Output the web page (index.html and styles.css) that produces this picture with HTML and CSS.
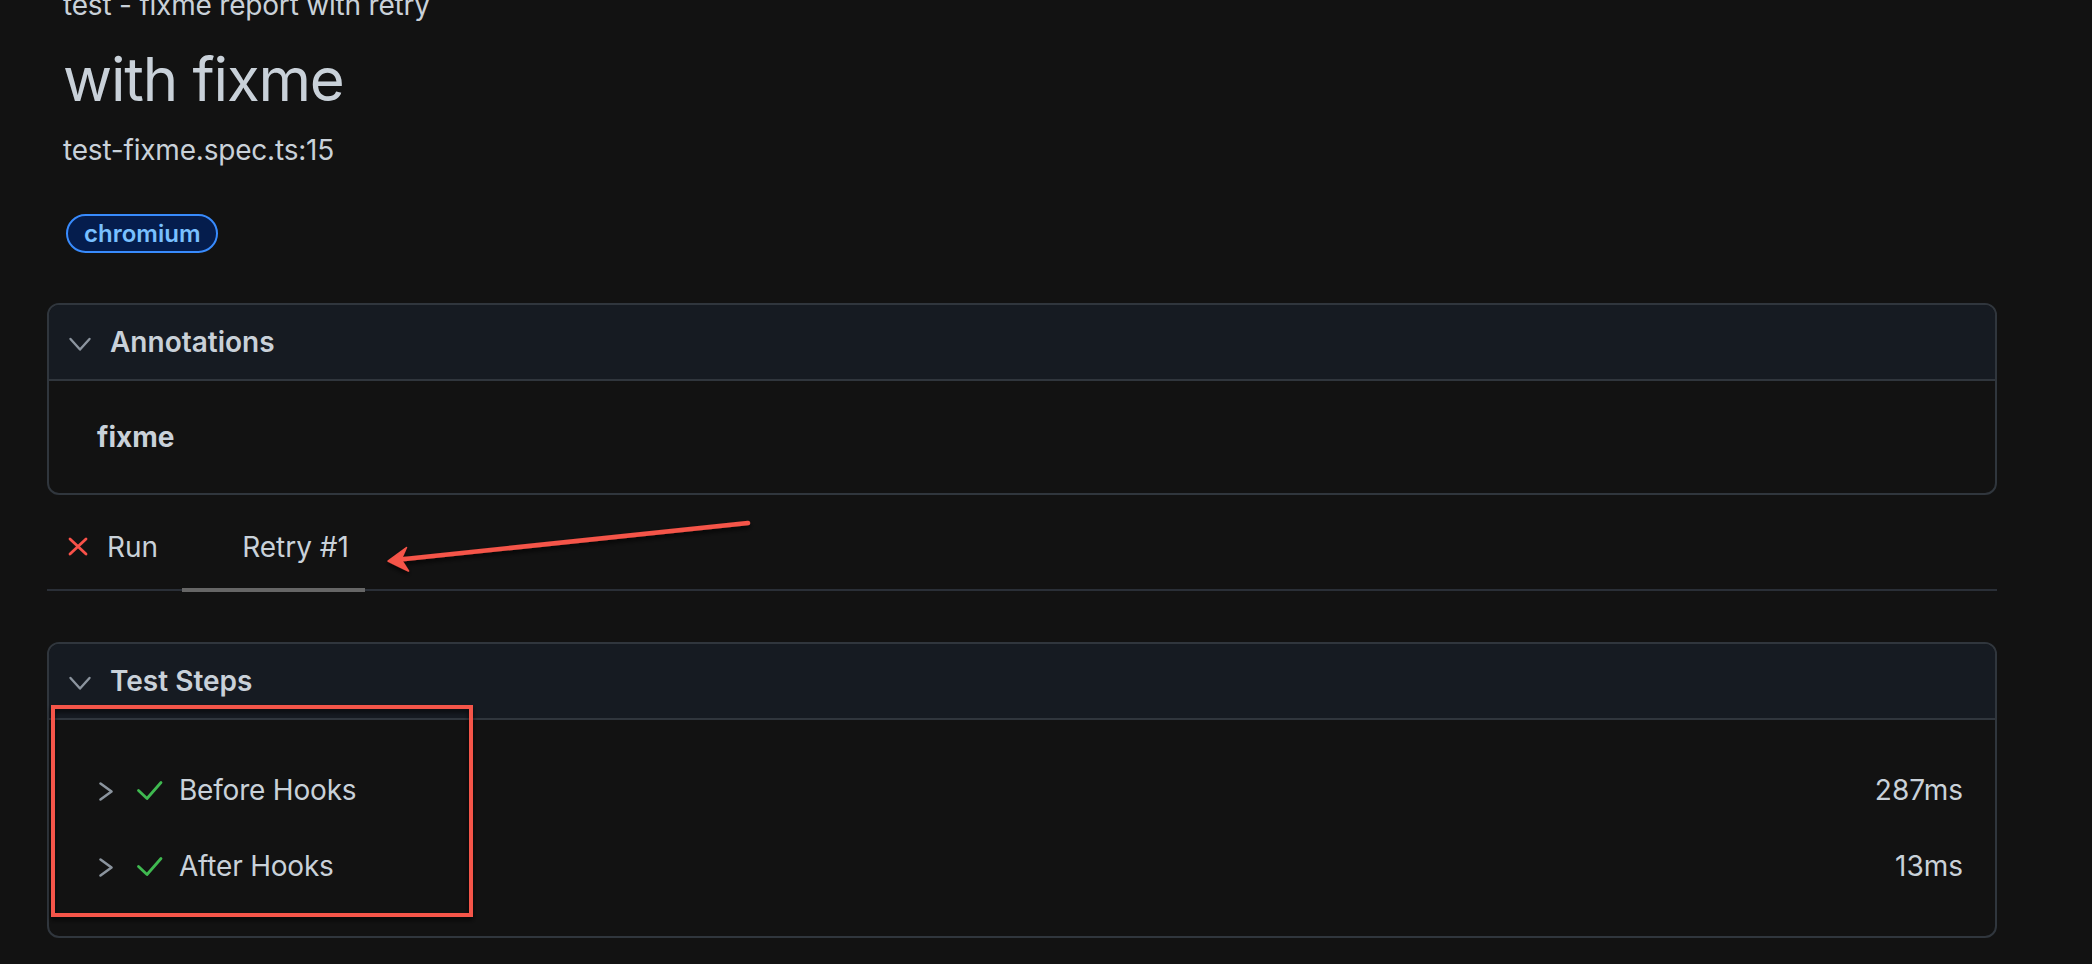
FILE: index.html
```html
<!DOCTYPE html>
<html>
<head>
<meta charset="utf-8">
<title>with fixme</title>
<link rel="stylesheet" href="styles.css">
</head>
<body>
<div class="page">
  <div class="test-path">test - fixme report with retry</div>
  <h1 class="test-title">with fixme</h1>
  <div class="test-location">test-fixme.spec.ts:15</div>
  <div class="labels"><span class="label">chromium</span></div>

  <section class="chip annotations">
    <div class="chip-header">
      <svg class="chev-down" viewBox="0 0 32 32"><path d="M6.5 13 L16 23.5 L25.5 13"/></svg>
      <span>Annotations</span>
    </div>
    <div class="chip-body">
      <div class="annotation">fixme</div>
    </div>
  </section>

  <div class="tabs">
    <div class="tab">
      <svg class="tab-icon x-icon" viewBox="0 0 32 32"><path d="M8 8 L24 23 M24 8 L8 23"/></svg>
      <span>Run</span>
    </div>
    <div class="tab selected">
      <span class="tab-icon"></span>
      <span>Retry #1</span>
    </div>
  </div>

  <section class="chip steps">
    <div class="chip-header">
      <svg class="chev-down" viewBox="0 0 32 32"><path d="M6.5 13 L16 23.5 L25.5 13"/></svg>
      <span>Test Steps</span>
    </div>
    <div class="chip-body steps-body">
      <div class="step">
        <svg class="chev-right" viewBox="0 0 32 32"><path d="M7.5 9.5 L18.5 17.5 L7.5 25.5"/></svg>
        <svg class="check" viewBox="0 0 32 32"><path d="M4.5 16.5 L13 24.5 L27 8.5"/></svg>
        <span class="step-title">Before Hooks</span>
        <span class="step-duration">287ms</span>
      </div>
      <div class="step">
        <svg class="chev-right" viewBox="0 0 32 32"><path d="M7.5 9.5 L18.5 17.5 L7.5 25.5"/></svg>
        <svg class="check" viewBox="0 0 32 32"><path d="M4.5 16.5 L13 24.5 L27 8.5"/></svg>
        <span class="step-title">After Hooks</span>
        <span class="step-duration">13ms</span>
      </div>
    </div>
  </section>
</div>

<svg class="markup" width="2092" height="964" viewBox="0 0 2092 964">
  <defs>
    <filter id="shadow" x="-10%" y="-10%" width="120%" height="130%">
      <feDropShadow dx="0" dy="3" stdDeviation="2.5" flood-color="#000" flood-opacity="0.75"/>
    </filter>
  </defs>
  <g filter="url(#shadow)">
    <line x1="748" y1="523" x2="400" y2="559.5" stroke="#f55448" stroke-width="4.5" stroke-linecap="round"/>
    <polygon points="388,561 406.5,547.5 401,559.5 408.5,571" fill="#f55448" stroke="#f55448" stroke-width="1.5" stroke-linejoin="round"/>
    <rect x="53" y="707" width="418" height="208" fill="none" stroke="#f55448" stroke-width="4"/>
  </g>
</svg>
</body>
</html>
```

FILE: styles.css
```css
* {
  box-sizing: border-box;
}

html,
body {
  margin: 0;
  padding: 0;
  background: #121212;
}

body {
  position: relative;
  height: 964px;
  overflow: hidden;
  font-family: Inter, "Noto Sans", "Liberation Sans", sans-serif;
  font-size: 28px;
  color: #c9d1d9;
}

.page {
  width: 1950px;
  margin-left: 47px;
  margin-top: -15px;
}

.test-path {
  padding: 0 16px;
  line-height: 40px;
  letter-spacing: -0.2px;
}

.test-title {
  margin: 14px 0 0;
  padding: 0 16px;
  font-size: 60px;
  font-weight: 400;
  line-height: 80px;
  letter-spacing: -1.2px;
}

.test-location {
  margin-top: 11px;
  padding: 0 16px;
  line-height: 40px;
  letter-spacing: -0.2px;
}

.labels {
  display: flex;
  margin-top: 44px;
  padding-left: 19px;
}

.label {
  display: inline-block;
  padding: 0 16px;
  font-size: 24px;
  font-weight: 600;
  line-height: 35px;
  border: 2px solid #388bfd;
  border-radius: 40px;
  background: #051d4d;
  color: #79c0ff;
}

.chip {
  border: 2px solid #30363d;
  border-radius: 12px;
  overflow: hidden;
}

.annotations {
  margin-top: 50px;
}

.chip-header {
  display: flex;
  align-items: center;
  padding: 17px 15px;
  line-height: 40px;
  font-weight: 600;
  background: #161b22;
  border-bottom: 2px solid #30363d;
}

.chev-down {
  flex: none;
  width: 32px;
  height: 32px;
  margin-right: 14px;
  fill: none;
  stroke: #8b949e;
  stroke-width: 2.4;
  stroke-linecap: round;
  stroke-linejoin: round;
}

.chip-body {
  padding: 32px 48px;
}

.annotation {
  line-height: 48px;
  font-weight: 700;
}

.tabs {
  display: flex;
  gap: 8px;
  border-bottom: 2px solid #2a2f37;
}

.tab {
  display: flex;
  align-items: center;
  padding: 32px 16px 21px 15px;
  line-height: 40px;
  border-bottom: 4px solid transparent;
  margin-bottom: -3px;
}

.tab.selected {
  border-bottom-color: #666666;
}

.tab-icon {
  flex: none;
  width: 32px;
  height: 32px;
  margin-right: 13px;
}

.x-icon {
  fill: none;
  stroke: #f85149;
  stroke-width: 2.8;
  stroke-linecap: round;
}

.steps {
  margin-top: 51px;
}

.steps-body {
  padding: 32px 32px 32px 44px;
}

.step {
  display: flex;
  align-items: center;
  height: 76px;
}

.step-title {
  letter-spacing: -0.2px;
}

.chev-right {
  flex: none;
  width: 32px;
  height: 32px;
  margin-right: 9px;
  fill: none;
  stroke: #8b949e;
  stroke-width: 2.6;
  stroke-linecap: round;
  stroke-linejoin: round;
}

.check {
  flex: none;
  width: 32px;
  height: 32px;
  margin-right: 13px;
  fill: none;
  stroke: #3fb950;
  stroke-width: 2.8;
  stroke-linecap: round;
  stroke-linejoin: round;
}

.step-duration {
  margin-left: auto;
}

.markup {
  position: absolute;
  left: 0;
  top: 0;
  pointer-events: none;
}
```
